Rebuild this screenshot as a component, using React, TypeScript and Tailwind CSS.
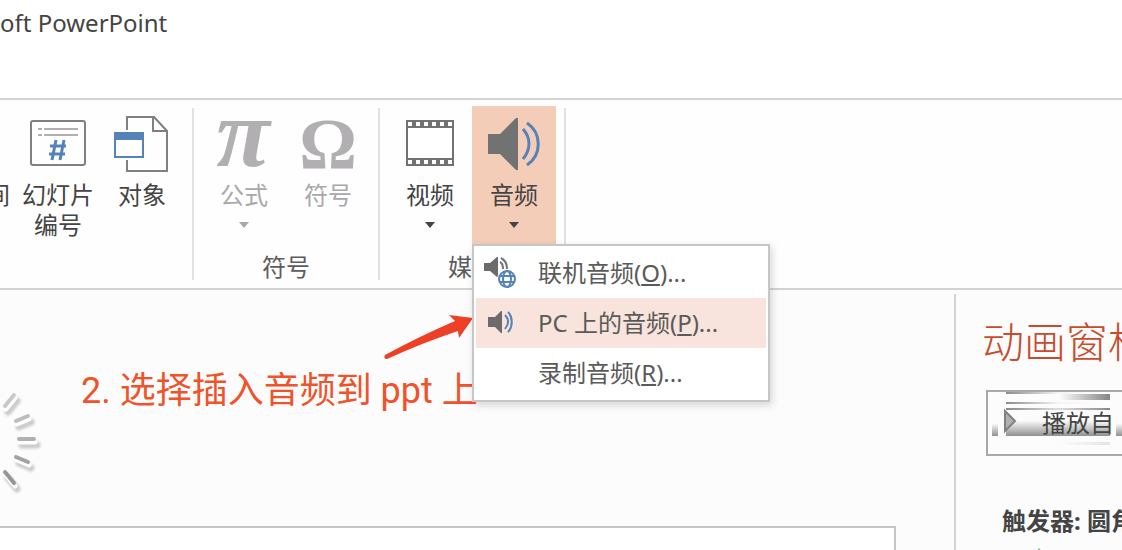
import * as React from 'react';

const UI_FONT = "font-['Noto_Sans','Noto_Sans_CJK_SC',sans-serif]";

function SlideNumberIcon() {
  return (
    <svg width="56" height="46" viewBox="0 0 56 46" fill="none" aria-hidden="true">
      <rect x="1" y="1" width="54" height="44" rx="2" stroke="#808080" strokeWidth="2" />
      <path d="M8 9h4M14 9h34M8 15h4M14 15h34" stroke="#b0b0b0" strokeWidth="2" />
      <path d="M26 20l-4 20M34 20l-4 20M20 26h16M19 34h16" stroke="#5583b8" strokeWidth="3" />
    </svg>
  );
}

function ObjectIcon() {
  return (
    <svg width="56" height="58" viewBox="0 -2 56 58" fill="none" aria-hidden="true">
      <path d="M13 14V1h27l13 14v40H13V44" stroke="#808080" strokeWidth="2" />
      <path d="M39 1v14h14" stroke="#808080" strokeWidth="2" />
      <rect x="1" y="17" width="28" height="24" fill="#fff" stroke="#5583b8" strokeWidth="2" />
      <path d="M0 16h30v8H0z" fill="#5583b8" />
    </svg>
  );
}

function FilmIcon() {
  const holes = [2, 10, 18, 26, 34, 42];
  return (
    <svg width="48" height="46" viewBox="0 0 48 46" aria-hidden="true">
      <path d="M0 0h48v46H0z" fill="#727272" />
      <path d="M2 8h44v30H2z" fill="#fff" />
      {holes.map((x) => (
        <React.Fragment key={x}>
          <rect x={x} y="2" width="4" height="4" fill="#fff" />
          <rect x={x} y="40" width="4" height="4" fill="#fff" />
        </React.Fragment>
      ))}
    </svg>
  );
}

function SpeakerIcon() {
  return (
    <svg width="52" height="54" viewBox="0 -2 52 54" fill="none" aria-hidden="true">
      <path d="M0 16h12L28 0h2v52h-2L12 36H0z" fill="#727272" />
      <path d="M35 11c8 9 8 20 0 30M39 5c15 10 15 32 0 42" stroke="#5583b8" strokeWidth="3" />
    </svg>
  );
}

function OnlineAudioIcon() {
  return (
    <svg width="62" height="50" viewBox="0 0 62 50" fill="none" aria-hidden="true">
      <path d="M8 15h6l7-6h1v20h-1l-7-6H8z" fill="#6b6b6b" />
      <path d="M24 14c2 1 3 3 3 7M25 10c4 2 6 6 6 11" stroke="#727272" strokeWidth="2" />
      <circle cx="31" cy="31" r="10" fill="#fff" />
      <circle cx="31" cy="31" r="8" stroke="#5583b8" strokeWidth="2" />
      <ellipse cx="31" cy="31" rx="4" ry="8" stroke="#5583b8" strokeWidth="2" />
      <path d="M24 28h14M24 34h14" stroke="#5583b8" strokeWidth="2" />
    </svg>
  );
}

function PcAudioIcon() {
  return (
    <svg width="62" height="50" viewBox="0 0 62 50" fill="none" aria-hidden="true">
      <path d="M12 19h7l6-6h1v22h-1l-6-6h-7z" fill="#6b6b6b" />
      <path d="M29 17c4 4 4 9 0 14M32 14c5 5 5 15 0 20" stroke="#5583b8" strokeWidth="2" />
    </svg>
  );
}

function PiIcon() {
  return (
    <svg width="60" height="56" viewBox="0 0 60 56" fill="#b1afb1" aria-hidden="true">
      <text x="29" y="51" textAnchor="middle" fontSize="98" className="font-['Liberation_Serif',serif] font-bold italic">
        π
      </text>
    </svg>
  );
}

function OmegaIcon() {
  return (
    <svg width="60" height="56" viewBox="0 0 60 56" fill="#b1afb1" aria-hidden="true">
      <text x="30" y="53" textAnchor="middle" fontSize="72" className="font-['Liberation_Serif',serif] font-bold">
        Ω
      </text>
    </svg>
  );
}

function Caret() {
  return (
    <svg width="10" height="30" viewBox="0 0 10 30" fill="currentColor" aria-hidden="true">
      <path d="M0 12h10l-5 6z" />
    </svg>
  );
}

interface RibbonButtonProps {
  icon: React.ReactNode;
  label: React.ReactNode;
  caret?: boolean;
  active?: boolean;
  disabled?: boolean;
}

function RibbonButton({ icon, label, caret, active, disabled }: RibbonButtonProps) {
  return (
    <button
      type="button"
      disabled={disabled}
      aria-haspopup={caret ? 'menu' : undefined}
      aria-expanded={active}
      className={`flex h-[138px] w-[84px] shrink-0 flex-col items-center text-[#444] disabled:text-[#a9a7a9] ${active ? 'bg-[#f4cdb8]' : ''}`}
    >
      <span className="flex h-[74px] items-center justify-center">{icon}</span>
      <span>{label}</span>
      {caret && <Caret />}
    </button>
  );
}

function RibbonGroup({ label, children }: { label?: string; children: React.ReactNode }) {
  return (
    <section className="flex flex-col py-[6px] pr-2">
      <div className="flex">{children}</div>
      {label && <h2 className="mt-2 text-center text-[#5c5c5c]">{label}</h2>}
    </section>
  );
}

function Separator() {
  return <div className="my-2 w-[2px] shrink-0 bg-[#e1e1e1]" />;
}

const MENU_ITEMS = [
  { text: '联机音频', accel: 'O', icon: <OnlineAudioIcon />, selected: false },
  { text: 'PC 上的音频', accel: 'P', icon: <PcAudioIcon />, selected: true },
  { text: '录制音频', accel: 'R', icon: null, selected: false },
];

function AudioMenu() {
  return (
    <div
      role="menu"
      className="absolute top-full left-0 z-20 w-[298px] border-2 border-[#c6c6c6] bg-white p-[2px] shadow-[2px_3px_8px_rgba(0,0,0,0.16)]"
    >
      {MENU_ITEMS.map((item) => (
        <button
          key={item.accel}
          type="button"
          role="menuitem"
          className={`flex h-[50px] w-full items-center text-left whitespace-nowrap text-[#5a5a5a] ${item.selected ? 'bg-[#f8e4dc]' : ''}`}
        >
          <span className="w-[62px] shrink-0">{item.icon}</span>
          <span>
            {item.text}(<u className="decoration-2 underline-offset-2">{item.accel}</u>)...
          </span>
        </button>
      ))}
    </div>
  );
}

function Ribbon() {
  return (
    <div className="flex border-y-2 border-[#d3d3d3] bg-[#fefefe] text-2xl leading-[30px]">
      <RibbonGroup>
        <button type="button" className="flex w-4 justify-end overflow-hidden pt-[74px] pr-[6px] text-[#444]">
          间
        </button>
        <RibbonButton icon={<SlideNumberIcon />} label={<>幻灯片<br />编号</>} />
        <RibbonButton icon={<ObjectIcon />} label="对象" />
      </RibbonGroup>
      <Separator />
      <div className="pl-2">
        <RibbonGroup label="符号">
          <RibbonButton icon={<PiIcon />} label="公式" caret disabled />
          <RibbonButton icon={<OmegaIcon />} label="符号" disabled />
        </RibbonGroup>
      </div>
      <Separator />
      <div className="pl-2">
        <RibbonGroup label="媒体">
          <RibbonButton icon={<FilmIcon />} label="视频" caret />
          <div className="relative">
            <RibbonButton icon={<SpeakerIcon />} label="音频" caret active />
            <AudioMenu />
          </div>
        </RibbonGroup>
      </div>
      <Separator />
    </div>
  );
}

const SPOKES = [
  { d: 'M5 26L14 15', color: '#c9c9c9' },
  { d: 'M16 41l12-5', color: '#bdbdbd' },
  { d: 'M19 59h15', color: '#b0b0b0' },
  { d: 'M16 77l12 5', color: '#a2a2a2' },
  { d: 'M5 92l9 11', color: '#969696' },
];

function Spinner() {
  return (
    <svg className="absolute top-[90px] left-0" width="48" height="120" viewBox="0 0 48 120" fill="none" aria-hidden="true">
      <g strokeLinecap="round">
        <g className="blur-[1px]">
          {SPOKES.map((s) => (
            <path key={s.d} d={s.d} stroke="#cccccc" strokeWidth="7" transform="translate(3 6)" />
          ))}
        </g>
        {SPOKES.map((s) => (
          <path key={s.d} d={s.d} stroke="#fff" strokeWidth="5" transform="translate(1 3)" />
        ))}
        {SPOKES.map((s) => (
          <path key={s.d} d={s.d} stroke={s.color} strokeWidth="4" />
        ))}
      </g>
    </svg>
  );
}

function PointerArrow() {
  return (
    <svg className="absolute top-[20px] left-[380px]" width="100" height="52" viewBox="0 0 100 52" aria-hidden="true">
      <path d="M5 45Q40 26 75 11L69 5l24 3-14 20-1-7Q42 33 7 49q-4 0-2-4z" fill="#ee4027" />
    </svg>
  );
}

function Canvas() {
  return (
    <div className="relative flex min-w-0 flex-1 flex-col">
      <PointerArrow />
      <Spinner />
      <p className="mt-[76px] pl-[81px] font-['Roboto','Noto_Sans_CJK_SC',sans-serif] text-[36px] leading-[50px] whitespace-nowrap text-[#f0522a]">
        2. 选择插入音频到 ppt 上
      </p>
      <div className="mt-[110px] mr-[58px] flex-1 border-t-2 border-r-2 border-[#c6c6c6] bg-white" />
    </div>
  );
}

function PlayButtonSheen() {
  return (
    <svg className="absolute top-0 left-0" width="138" height="62" viewBox="0 0 138 62" aria-hidden="true">
      <defs>
        <linearGradient id="streak">
          <stop offset="0" stopColor="#8a8a8a" />
          <stop offset=".5" stopColor="#f4f4f4" />
          <stop offset="1" stopColor="#fff" />
        </linearGradient>
        <linearGradient id="streakEnd">
          <stop offset="0" stopColor="#fff" />
          <stop offset="1" stopColor="#858585" />
        </linearGradient>
        <linearGradient id="streakBoth">
          <stop offset="0" stopColor="#888" />
          <stop offset=".5" stopColor="#ddd" />
          <stop offset="1" stopColor="#888" />
        </linearGradient>
        <linearGradient id="floor" x2="0" y2="1">
          <stop offset="0" stopColor="#fff" />
          <stop offset="1" stopColor="#909090" />
        </linearGradient>
      </defs>
      <path d="M18 0h104v2H18zM18 10h104v2H18z" fill="url(#streak)" />
      <path d="M70 2h52v6H70z" fill="url(#streakEnd)" />
      <path d="M18 16h104v2H18z" fill="url(#streakBoth)" />
      <path d="M18 28h104v16H18z" fill="url(#floor)" />
      <path d="M70 50h52v3H70z" fill="url(#streakEnd)" opacity=".2" />
      <path d="M4 31h6v13H4zM128 31h10v13h-10z" fill="url(#floor)" />
      <path d="M17 19v20l10-10z" fill="#b0b0b0" stroke="#808080" strokeWidth="2" />
    </svg>
  );
}

function AnimationPane() {
  return (
    <aside className="mt-1 w-[168px] shrink-0 overflow-hidden border-l-2 border-[#d3d3d3] whitespace-nowrap">
      <h1 className="mt-5 pl-[26px] text-[42px] leading-[56px] font-light text-[#c84b2c]">动画窗格</h1>
      <button
        type="button"
        className="relative mt-5 ml-[30px] h-[66px] w-[180px] border-2 border-[#a9a9a9] pl-[54px] text-left text-2xl leading-[58px] text-[#444]"
      >
        <PlayButtonSheen />
        <span className="relative">播放自</span>
      </button>
      <p className="mt-[50px] pl-[46px] text-2xl leading-[30px] font-bold text-[#444]">触发器: 圆角</p>
      <svg className="mt-3 ml-20" width="6" height="8" viewBox="0 0 6 8" aria-hidden="true">
        <path d="M3 0l3 4H0z" fill="#8fae7c" />
      </svg>
    </aside>
  );
}

export default function App() {
  return (
    <div className={`flex h-screen flex-col overflow-hidden bg-[#fcfcfc] ${UI_FONT}`}>
      <header className="h-[98px] shrink-0 bg-white pt-2 text-2xl leading-[30px] text-[#444]">oft PowerPoint</header>
      <Ribbon />
      <main className="flex min-h-0 flex-1">
        <Canvas />
        <AnimationPane />
      </main>
    </div>
  );
}
